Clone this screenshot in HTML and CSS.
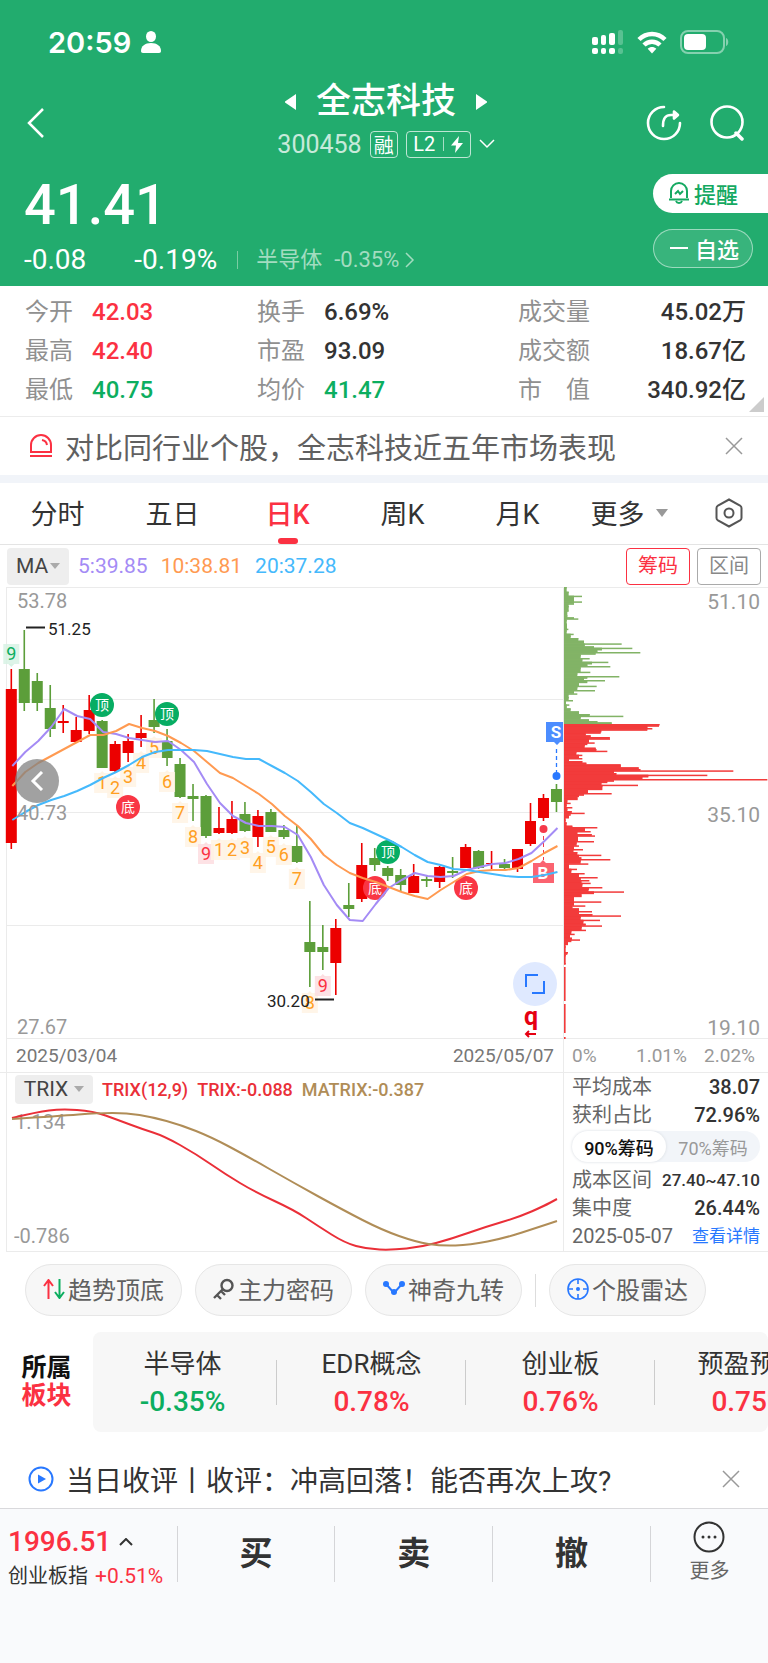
FILE: index.html
```html
<!DOCTYPE html>
<html lang="zh-CN">
<head>
    <meta charset="UTF-8">
    <meta name="viewport" content="width=device-width, initial-scale=1.0">
    <title>全志科技 300458</title>
    <link rel="stylesheet" href="styles.css">
</head>
<body>
    <header class="header">
        <div class="status-bar">
            <div class="status-left">
                <span class="clock">20:59</span>
                <svg width="20" height="22" viewBox="0 0 20 22" fill="#fff"><ellipse cx="10" cy="5.5" rx="5" ry="5.5"/><path d="M0 20c0-5 4-8 10-8s10 3 10 8c0 1.300-.7 2-2 2H2c-1.300 0-2-.7-2-2z"/></svg>
            </div>
            <div class="status-right">
                <svg width="32" height="24" viewBox="0 0 32 24" fill="#fff">
                    <rect x="0" y="7" width="6" height="8" rx="2"/><rect x="9" y="5" width="5" height="10" rx="2"/><rect x="17" y="3" width="6" height="12" rx="2"/><rect x="26" y="0" width="5" height="15" rx="2" opacity=".25"/>
                    <rect x="0" y="18" width="6" height="6" rx="2"/><rect x="9" y="18" width="5" height="6" rx="2"/><rect x="17" y="18" width="6" height="6" rx="2"/><rect x="26" y="18" width="5" height="6" rx="2" opacity=".25"/>
                </svg>
                <svg width="30" height="23" viewBox="0 0 30 23" fill="none" stroke="#fff" stroke-width="4.500"><path d="M2 8.500c7.500-7.500 18.500-7.500 26 0"/><path d="M7 14c4.500-4.500 11.500-4.500 16 0"/><path d="M15 22.500l-4.300-4.800c2.600-2.200 6-2.200 8.600 0z" fill="#fff" stroke="none"/></svg>
                <svg width="50" height="24" viewBox="0 0 50 24"><rect x="1" y="1" width="43" height="22" rx="7" fill="none" stroke="#fff" stroke-width="2" opacity=".45"/><rect x="4" y="4" width="22" height="16" rx="4" fill="#fff"/><path d="M46 8c3 1 3 7 0 8z" fill="#fff" opacity=".45"/></svg>
            </div>
        </div>

        <nav class="nav">
            <button class="icon-btn back" aria-label="返回"><svg width="18" height="32" viewBox="0 0 18 32" fill="none" stroke="#fff" stroke-width="2.500"><path d="M16 2L2 16l14 14"/></svg></button>
            <div class="nav-center">
                <div class="title">
                    <button class="icon-btn" aria-label="上一只"><svg width="12" height="16" viewBox="0 0 12 16" fill="#fff"><path d="M11 0v16L0 8.500v-1z"/></svg></button>
                    <h1>全志科技</h1>
                    <button class="icon-btn" aria-label="下一只"><svg width="12" height="16" viewBox="0 0 12 16" fill="#fff"><path d="M1 0v16l11-7.500v-1z"/></svg></button>
                </div>
                <div class="subtitle">
                    <span class="code">300458</span>
                    <span class="tag">融</span>
                    <span class="tag tag-l2">L2<i class="tag-line"></i><svg width="12" height="17" viewBox="0 0 12 17" fill="#fff"><path d="M8 0L0 9.500h5L4 17l8-10H7z"/></svg></span>
                    <svg width="16" height="10" viewBox="0 0 16 10" fill="none" stroke="#fff" stroke-width="1.500"><path d="M1 1l7 7 7-7"/></svg>
                </div>
            </div>
            <div class="nav-actions">
                <button class="icon-btn" aria-label="分享"><svg width="36" height="36" viewBox="0 0 36 36" fill="none" stroke="#fff" stroke-width="2.600" stroke-linecap="round"><path d="M18 2a16 16 0 1 0 16 16"/><path d="M17 21c0-7 2-11 8-11h4"/><path d="M28 6.500l4 3.500-4 3.500z" fill="#fff" stroke-linejoin="round"/></svg></button>
                <button class="icon-btn" aria-label="搜索"><svg width="36" height="36" viewBox="0 0 36 36" fill="none" stroke="#fff" stroke-width="2.600"><circle cx="18" cy="17" r="15.500"/><path d="M27 28l6 6" stroke-width="3.500" stroke-linecap="round"/></svg></button>
            </div>
        </nav>

        <section class="quote">
            <div>
                <div class="price">41.41</div>
                <div class="change">
                    <span>-0.08</span>
                    <span class="percent">-0.19%</span>
                    <a class="industry" href="#"><span>半导体</span><span>-0.35%</span><svg width="10" height="16" viewBox="0 0 10 16" fill="none" stroke="currentColor" stroke-width="1.500"><path d="M1 1l7 7-7 7"/></svg></a>
                </div>
            </div>
            <div class="quote-actions">
                <button class="remind"><svg width="22" height="22" viewBox="0 0 22 22" fill="none" stroke="#14a961" stroke-width="2"><path d="M3 16V9a8 8 0 0 1 16 0v7M1 17.500h20M8 19c1 2.500 5 2.500 6 0"/><path d="M7 12l3-3 2 3 3-3"/></svg>提醒</button>
                <button class="watch"><svg width="18" height="2" viewBox="0 0 18 2" fill="#fff"><rect width="18" height="2"/></svg>自选</button>
            </div>
        </section>
    </header>

    <main>
        <section class="stats">
            <dl>
                <dt>今开</dt><dd class="up">42.03</dd>
                <dt>最高</dt><dd class="up">42.40</dd>
                <dt>最低</dt><dd class="down">40.75</dd>
            </dl>
            <dl>
                <dt>换手</dt><dd>6.69%</dd>
                <dt>市盈</dt><dd>93.09</dd>
                <dt>均价</dt><dd class="down">41.47</dd>
            </dl>
            <dl class="stats-right">
                <dt>成交量</dt><dd>45.02万</dd>
                <dt>成交额</dt><dd>18.67亿</dd>
                <dt>市　值</dt><dd>340.92亿</dd>
            </dl>
            <span class="corner"></span>
        </section>

        <section class="notice">
            <svg width="24" height="24" viewBox="0 0 24 24" fill="none" stroke="#fb3142" stroke-width="2"><path d="M2 18v-7a10 10 0 0 1 20 0v7zM1 22h22M13 6c3 .5 4.500 2 5 5"/></svg>
            <a href="#">对比同行业个股，全志科技近五年市场表现</a>
            <button class="icon-btn" aria-label="关闭"><svg width="18" height="18" viewBox="0 0 18 18" stroke="#999" stroke-width="1.500"><path d="M1 1l16 16M17 1L1 17"/></svg></button>
        </section>

        <nav class="tabs">
            <button>分时</button>
            <button>五日</button>
            <button class="active">日K</button>
            <button>周K</button>
            <button>月K</button>
            <button class="tab-more">更多<i class="caret"></i></button>
            <button class="tab-set" aria-label="设置"><svg width="28" height="30" viewBox="0 0 28 30" fill="none" stroke="#555" stroke-width="2"><path d="M14 1.500l11 6q1.500 1 1.500 2.500v10q0 1.500-1.500 2.500l-11 6-11-6Q1.500 21.500 1.500 20V10Q1.500 8.500 3 7.500z"/><circle cx="14" cy="15" r="4.500"/></svg></button>
        </nav>

        <div class="ma-bar">
            <button class="indicator">MA<i class="caret"></i></button>
            <span class="ma5">5:39.85</span>
            <span class="ma10">10:38.81</span>
            <span class="ma20">20:37.28</span>
            <button class="chip chip-on">筹码</button>
            <button class="chip">区间</button>
        </div>

        <section class="kline">
            <svg id="kline" viewBox="0 0 768 452">
                <g class="grid">
                    <path d="M6 .5H768M6 112.500H563M6 225.500H563M6 338.500H563M6 451.500H768M6.500 0V452M563.500 0V452"/>
                </g>
                <g id="candles"></g>
                <g id="marks"></g>
                <g class="badges">
                    <g class="top-badge"><circle cx="102" cy="118" r="12"/><circle cx="167" cy="127" r="12"/><circle cx="388" cy="265" r="12"/></g>
                    <g class="bottom-badge"><circle cx="128" cy="220" r="12"/><circle cx="375" cy="301" r="12"/><circle cx="466" cy="301" r="12"/></g>
                    <text x="102" y="123">顶</text><text x="167" y="132">顶</text><text x="388" y="270">顶</text>
                    <text x="128" y="225">底</text><text x="375" y="306">底</text><text x="466" y="306">底</text>
                </g>
                <g class="trade">
                    <path d="M546 135h17v20h-3l-3 3-3-3h-8z" fill="#4c8dff"/>
                    <path d="M556.500 162v24" stroke="#2878ff" stroke-width="1.300" stroke-dasharray="4 3"/>
                    <circle cx="556.500" cy="189" r="4" fill="#2878ff"/>
                    <text x="556" y="151">S</text>
                    <circle cx="543.500" cy="242" r="4" fill="#f5394a"/>
                    <path d="M543.500 249v24" stroke="#f5394a" stroke-dasharray="4 3"/>
                    <path d="M533 276h7l3-3 3 3h8v20h-21z" fill="#fb6370"/>
                    <text x="543" y="292">B</text>
                </g>
                <g id="averages"></g>
                <g id="profile"></g>
                <g class="axis">
                    <text x="17" y="21">53.78</text><text x="17" y="233">40.73</text><text x="17" y="447">27.67</text>
                </g>
                <g class="axis axis-right">
                    <text x="760" y="22">51.10</text><text x="760" y="235">35.10</text><text x="760" y="448">19.10</text>
                </g>
                <g class="extreme">
                    <path d="M26 40.500h19M315 412.500h19"/>
                    <text x="48" y="48">51.25</text><text x="267" y="420">30.20</text>
                </g>
                <text class="ex-right" x="531" y="438">q</text>
                <path d="M526 447h10M529 444l-3 3 3 3" fill="none" stroke="#e60012" stroke-width="2"/>
            </svg>
            <button class="float-btn prev" aria-label="左移"><svg width="14" height="20" viewBox="0 0 14 20" fill="none" stroke="#fff" stroke-width="3"><path d="M12 1L3 10l9 9"/></svg></button>
            <button class="float-btn expand" aria-label="全屏"><svg width="20" height="20" viewBox="0 0 20 20" fill="none" stroke="#2878ff" stroke-width="2"><path d="M1 13V1h12M19 7v12H7"/></svg></button>
        </section>

        <section class="split dates">
            <div class="pane"><span>2025/03/04</span><span>2025/05/07</span></div>
            <div class="scale"><span>0%</span><span>1.01%</span><span>2.02%</span></div>
        </section>

        <section class="split">
            <div class="trix">
                <div class="trix-head">
                    <button class="indicator">TRIX<i class="caret"></i></button>
                    <span class="trix-a">TRIX(12,9)</span>
                    <span class="trix-a">TRIX:-0.088</span>
                    <span class="trix-b">MATRIX:-0.387</span>
                </div>
                <svg id="trix" viewBox="0 0 564 146">
                    <g class="axis"><text x="15" y="24">1.134</text><text x="14" y="138">-0.786</text></g>
                </svg>
            </div>
            <div class="cost">
                <div class="cost-row"><span>平均成本</span><b>38.07</b></div>
                <div class="cost-row"><span>获利占比</span><b>72.96%</b></div>
                <div class="switch"><button class="on">90%筹码</button><button>70%筹码</button></div>
                <div class="cost-row"><span>成本区间</span><b class="range">27.40~47.10</b></div>
                <div class="cost-row"><span>集中度</span><b>26.44%</b></div>
                <div class="cost-row"><span class="day">2025-05-07</span><a href="#">查看详情</a></div>
            </div>
        </section>

        <section class="tools">
            <button><svg width="22" height="20" viewBox="0 0 22 20" fill="none" stroke-width="2"><path d="M5.500 20V1M1 7l4.500-6L10 7" stroke="#fb3142"/><path d="M16.500 0v19M12 13l4.500 6 4.500-6" stroke="#0cae5f"/></svg>趋势顶底</button>
            <button><svg width="22" height="22" viewBox="0 0 22 22" fill="none" stroke="#555" stroke-width="2.400"><circle cx="14" cy="7.500" r="5.500"/><path d="M10 11L1 20M4 17l4 4M8 13l4 4"/></svg>主力密码</button>
            <button><svg width="22" height="18" viewBox="0 0 22 18" fill="none" stroke="#2878ff" stroke-width="2"><path d="M3 4l8 9 8-9"/><g fill="#2878ff" stroke="none"><circle cx="3" cy="4" r="3"/><circle cx="19" cy="4" r="3"/><circle cx="11" cy="12" r="3"/></g></svg>神奇九转</button>
            <i class="tools-line"></i>
            <button><svg width="22" height="22" viewBox="0 0 22 22" fill="none" stroke="#2878ff" stroke-width="1.600"><circle cx="11" cy="11" r="10"/><path d="M11 1v5M11 16v5M1 11h5M16 11h5"/><circle cx="11" cy="11" r="2" fill="#2878ff" stroke="none"/></svg>个股雷达</button>
        </section>

        <section class="sectors">
            <h2>所属<span>板块</span></h2>
            <div class="sector-list">
                <a href="#">半导体<b class="down">-0.35%</b></a>
                <a href="#">EDR概念<b class="up">0.78%</b></a>
                <a href="#">创业板<b class="up">0.76%</b></a>
                <a href="#">预盈预增<b class="up">0.75%</b></a>
            </div>
        </section>

        <section class="notice news">
            <svg width="26" height="26" viewBox="0 0 26 26"><circle cx="13" cy="13" r="11.500" fill="none" stroke="#2878ff" stroke-width="2"/><path d="M10 8.500v9l8-4.500z" fill="#2878ff"/></svg>
            <a href="#">当日收评丨收评：冲高回落！能否再次上攻?</a>
            <button class="icon-btn" aria-label="关闭"><svg width="18" height="18" viewBox="0 0 18 18" stroke="#999" stroke-width="1.500"><path d="M1 1l16 16M17 1L1 17"/></svg></button>
        </section>
    </main>

    <footer class="bottom-bar">
        <div class="index">
            <div class="index-value">1996.51<svg width="14" height="8" viewBox="0 0 14 8" fill="none" stroke="#333" stroke-width="2"><path d="M1 7l6-6 6 6"/></svg></div>
            <div class="index-name">创业板指 <span class="up">+0.51%</span></div>
        </div>
        <button>买</button>
        <button>卖</button>
        <button>撤</button>
        <button class="more"><svg width="32" height="32" viewBox="0 0 32 32" fill="#333"><circle cx="16" cy="16" r="14.500" fill="none" stroke="#333" stroke-width="2"/><circle cx="10" cy="16" r="1.500"/><circle cx="16" cy="16" r="1.500"/><circle cx="22" cy="16" r="1.500"/></svg>更多</button>
    </footer>

    <script src="chart.js"></script>
</body>
</html>
```

FILE: styles.css
```css
* {
    box-sizing: border-box;
}
body {
    margin: 0;
    min-height: 100vh;
    display: flex;
    flex-direction: column;
    font-family: Roboto, "Noto Sans CJK SC", sans-serif;
    color: #333;
    background: #fff;
}
button {
    padding: 0;
    border: none;
    background: none;
    font: inherit;
    color: inherit;
    cursor: pointer;
}
a {
    color: inherit;
    text-decoration: none;
}
svg {
    display: block;
    flex: none;
}
.up {
    color: #fb3142;
}
.down {
    color: #0cae5f;
}
.icon-btn {
    display: flex;
}
.caret {
    border: 6px solid transparent;
    border-top: 8px solid #999;
    border-bottom: 0;
}

/* header */
.header {
    background: #22ac6e;
    color: #fff;
    padding-bottom: 12px;
}
.status-bar {
    height: 80px;
    padding: 4px 38px 0 48px;
    display: flex;
    align-items: center;
    justify-content: space-between;
}
.status-left,
.status-right {
    display: flex;
    align-items: center;
    gap: 13px;
}
.clock {
    font-family: Inter, sans-serif;
    font-size: 29px;
    font-weight: 600;
}
.status-left {
    gap: 10px;
}
.nav {
    display: grid;
    grid-template-columns: 1fr auto 1fr;
    align-items: center;
    padding: 0 23px 0 27px;
}
.back {
    padding-top: 8px;
}
.nav-center {
    display: flex;
    flex-direction: column;
    align-items: center;
    gap: 6px;
}
.title,
.subtitle {
    display: flex;
    align-items: center;
}
.title {
    gap: 19px;
}
.title h1 {
    margin: 0;
    font-size: 35px;
    font-weight: 500;
    line-height: 44px;
}
.subtitle {
    gap: 8px;
    height: 28px;
    font-size: 25px;
}
.code {
    opacity: .75;
}
.tag {
    height: 27px;
    padding: 0 3px;
    display: flex;
    align-items: center;
    border: 1px solid rgba(255, 255, 255, .7);
    border-radius: 4px;
    font-size: 20px;
}
.tag-l2 {
    width: 65px;
    justify-content: space-around;
}
.tag-line {
    width: 1px;
    height: 14px;
    background: rgba(255, 255, 255, .6);
}
.nav-actions {
    display: flex;
    justify-content: flex-end;
    gap: 27px;
    padding-top: 8px;
}
.quote {
    margin-top: 16px;
    padding-left: 24px;
    display: flex;
    justify-content: space-between;
}
.price {
    font-size: 56px;
    font-weight: 500;
    line-height: 62px;
}
.change {
    margin-top: 10px;
    display: flex;
    align-items: center;
    font-size: 28px;
    line-height: 28px;
}
.percent {
    margin-left: 48px;
}
.industry {
    margin-left: 20px;
    display: flex;
    align-items: center;
    gap: 12px;
    font-size: 22px;
    color: #a3dcc0;
}
.industry svg {
    margin-left: -6px;
}
.industry::before {
    content: "";
    width: 1px;
    height: 18px;
    margin-right: 6px;
    background: #7acca3;
}
.quote-actions {
    display: flex;
    flex-direction: column;
    gap: 16px;
}
.quote-actions button {
    height: 39px;
    padding-bottom: 2px;
    display: flex;
    align-items: center;
    font-size: 22px;
    font-weight: 500;
}
.quote-actions .remind {
    width: 115px;
    padding-left: 15px;
    gap: 4px;
    border-radius: 20px 0 0 20px;
    background: #fff;
    color: #14a961;
}
.quote-actions .watch {
    width: 100px;
    padding-left: 16px;
    gap: 7px;
    border: 1px solid rgba(255, 255, 255, .5);
    border-radius: 20px;
    background: rgba(255, 255, 255, .1);
}

/* figures */
.stats {
    position: relative;
    display: grid;
    grid-template-columns: 232fr 261fr 228fr;
    padding: 7px 22px 6px 25px;
    border-bottom: 1px solid #ececec;
}
.stats dl {
    margin: 0;
    display: grid;
    grid-template-columns: auto 1fr;
    column-gap: 19px;
    font-size: 24px;
    line-height: 39px;
}
.stats dt {
    color: #909090;
}
.stats dd {
    margin: 0;
    font-weight: 500;
}
.stats-right dd {
    text-align: right;
}
.corner {
    position: absolute;
    right: 4px;
    bottom: 4px;
    border-left: 15px solid transparent;
    border-bottom: 15px solid #ccc;
}

.notice {
    height: 58px;
    padding: 0 25px 0 29px;
    display: flex;
    align-items: center;
    gap: 12px;
    font-size: 29px;
    color: #606060;
}
.notice .icon-btn {
    margin-left: auto;
}

/* period tabs */
.tabs {
    display: flex;
    height: 70px;
    padding-right: 25px;
    border-top: 8px solid #f1f4f9;
    border-bottom: 1px solid #e4e4e4;
    font-size: 27px;
}
.tabs button {
    flex: 115;
    position: relative;
    padding-bottom: 2px;
}
.tabs .active {
    color: #fb3142;
    font-weight: 500;
}
.tabs .active::after {
    content: "";
    position: absolute;
    left: 50%;
    bottom: 0;
    width: 20px;
    margin-left: -10px;
    height: 6px;
    border-radius: 3px;
    background: #fb3142;
}
.tabs .tab-more {
    flex: 108;
    display: flex;
    align-items: center;
    justify-content: center;
    gap: 11px;
}
.tabs .tab-set {
    flex: 60;
    display: flex;
    align-items: center;
    justify-content: flex-end;
}

.ma-bar {
    height: 42px;
    padding: 0 7px;
    display: flex;
    align-items: center;
    gap: 13px;
    font-size: 21px;
}
.indicator {
    display: flex;
    align-items: center;
    justify-content: center;
    gap: 2px;
    width: 62px;
    height: 37px;
    border-radius: 4px;
    background: #eee;
    color: #444;
}
.indicator .caret {
    border-width: 5px;
    border-top-width: 6px;
    border-bottom: 0;
    border-top-color: #aaa;
}
.indicator + span {
    margin-left: -4px;
}
.ma5 {
    color: #a48bf5;
}
.ma10 {
    color: #ff9a51;
}
.ma20 {
    color: #45b9fc;
}
.chip {
    width: 64px;
    height: 37px;
    border: 1px solid #aaa;
    border-radius: 4px;
    font-size: 20px;
    line-height: 34px;
    color: #888;
}
.chip + .chip {
    margin-left: -6px;
}
.chip-on {
    margin-left: auto;
    border-color: #fb3142;
    color: #fb3142;
}

/* candle chart */
.kline {
    position: relative;
}
.kline > svg,
.trix > svg {
    width: 100%;
    height: auto;
}
.grid path {
    fill: none;
    stroke: #ebebeb;
}
.axis text {
    font-size: 20px;
    fill: #999;
}
.axis-right text {
    font-size: 21px;
    text-anchor: end;
}
.extreme text {
    font-size: 17px;
    fill: #222;
}
.extreme path {
    stroke: #222;
    stroke-width: 2;
}
.top-badge {
    fill: #07ad63;
}
.bottom-badge {
    fill: #f93644;
}
.badges text {
    font-size: 14px;
    text-anchor: middle;
    fill: #fff;
}
.trade text {
    font-size: 17px;
    font-weight: 700;
    text-anchor: middle;
    fill: #fff;
}
.mark {
    font-size: 18px;
    text-anchor: middle;
}
.average {
    fill: none;
    stroke-width: 2;
    stroke-linejoin: round;
}
.ex-right {
    font-size: 25px;
    font-weight: 700;
    text-anchor: middle;
    fill: #e60012;
}
.float-btn {
    position: absolute;
    width: 44px;
    height: 44px;
    border-radius: 50%;
    display: flex;
    align-items: center;
    justify-content: center;
}
.prev {
    left: 2%;
    top: 38%;
    background: rgba(130, 130, 130, .75);
}
.expand {
    right: 27.500%;
    top: 83%;
    background: #dfe9ff;
}

.split {
    display: grid;
    grid-template-columns: 564fr 204fr;
}
.dates {
    height: 34px;
    font-size: 19px;
    line-height: 34px;
    border-bottom: 1px solid #ebebeb;
}
.pane {
    display: flex;
    justify-content: space-between;
    margin-left: 6px;
    padding: 0 9px;
    border-left: 1px solid #ebebeb;
    border-right: 1px solid #ebebeb;
    color: #777;
}
.scale {
    display: grid;
    grid-template-columns: 64px 1fr auto;
    padding: 0 13px 0 8px;
    color: #999;
}

/* TRIX and cost */
.trix {
    margin-left: 6px;
    border: 1px solid #ebebeb;
    border-top: 0;
}
.trix > svg {
    width: calc(100% + 8px);
    margin-left: -7px;
}
.trix-head {
    height: 32px;
    padding: 0 8px;
    display: flex;
    align-items: center;
    gap: 9px;
    font-size: 18px;
    font-weight: 500;
}
.trix-head .indicator {
    width: 78px;
    height: 29px;
    gap: 6px;
    font-size: 21px;
    font-weight: 400;
}
.trix-head .indicator + span {
    margin-left: 0;
}
.trix-a {
    color: #ea2f38;
}
.trix-b {
    color: #b08d57;
}
.cost {
    padding: 0 8px;
    border-bottom: 1px solid #ebebeb;
    font-size: 20px;
}
.cost-row {
    display: flex;
    align-items: center;
    justify-content: space-between;
    height: 28px;
    line-height: 26px;
    padding-bottom: 1px;
    color: #666;
}
.cost-row b {
    font-weight: 500;
    color: #333;
}
.cost-row .range {
    font-size: 17px;
}
.cost-row a {
    font-size: 17px;
    color: #2878ff;
}
.switch {
    display: flex;
    height: 31px;
    margin: 2px 0 4px;
    border-radius: 16px;
    background: #f2f5f9;
    font-size: 18px;
    color: #999;
}
.switch button {
    flex: 1;
}
.switch .on {
    border-radius: 16px;
    background: #fff;
    box-shadow: 0 0 3px #d5d9df;
    font-weight: 500;
    color: #111;
}

.tools {
    display: flex;
    align-items: center;
    gap: 13px;
    padding: 12px 25px 16px;
}
.tools button {
    flex: 0 0 157px;
    height: 52px;
    padding-bottom: 3px;
    display: flex;
    align-items: center;
    justify-content: center;
    gap: 3px;
    border: 1px solid #e6e6e6;
    border-radius: 26px;
    background: #f7f7f7;
    font-size: 24px;
    color: #606060;
}
.tools-line {
    width: 1px;
    height: 33px;
    background: #ddd;
}

.sectors {
    display: flex;
    align-items: center;
}
.sectors h2 {
    flex: none;
    width: 93px;
    margin: 0;
    text-align: center;
    font-size: 25px;
    font-weight: 700;
    line-height: 28px;
    color: #111;
}
.sectors h2 span {
    display: block;
    color: #fb3142;
}
.sector-list {
    flex: 1;
    display: flex;
    height: 100px;
    overflow: hidden;
    border-radius: 8px;
    background: #f7f7f7;
}
.sector-list a {
    flex: 0 0 28%;
    display: flex;
    flex-direction: column;
    align-items: center;
    justify-content: center;
    padding-top: 2px;
    font-size: 26px;
    line-height: 38px;
    background: linear-gradient(#ccc, #ccc) right / 1px 45px no-repeat;
}
.sector-list a:first-child {
    margin-left: -5px;
}
.sector-list b {
    font-size: 28px;
    font-weight: 500;
}
.news {
    height: 76px;
    padding: 18px 28px 0;
    font-size: 28px;
    color: #333;
}

/* bottom bar */
.bottom-bar {
    flex: 1;
    display: flex;
    align-items: flex-start;
    padding-top: 17px;
    border-top: 1px solid #d9d9dc;
    background: #f9fafc;
}
.index {
    flex: 0 0 23%;
    padding-left: 8px;
}
.index-value {
    display: flex;
    align-items: center;
    gap: 8px;
    font-size: 28px;
    font-weight: 500;
    line-height: 32px;
    color: #fb3142;
}
.index-name {
    font-size: 20px;
    line-height: 36px;
    white-space: nowrap;
}
.index-name .up {
    margin-left: 2px;
    font-size: 21px;
}
.bottom-bar button {
    flex: 158;
    height: 56px;
    padding-bottom: 7px;
    border-left: 1px solid #d5d5d8;
    font-size: 33px;
    font-weight: 700;
}
.bottom-bar .more {
    flex: 118;
    padding-bottom: 2px;
    display: flex;
    flex-direction: column;
    align-items: center;
    justify-content: center;
    gap: 4px;
    font-size: 20px;
    font-weight: 400;
    line-height: 28px;
    color: #666;
}
```

FILE: chart.js
```js
const NS = "http://www.w3.org/2000/svg";
const RED = "#ec0000";
const GREEN = "#5c9e3a";

function add(parent, tag, attrs, text) {
    const el = document.createElementNS(NS, tag);
    for (const key in attrs) {
        el.setAttribute(key, attrs[key]);
    }
    if (text) {
        el.textContent = text;
    }
    parent.appendChild(el);
    return el;
}

const xAt = (i) => 11.3 + i * 12.98;

// direction, high, body top, body bottom, low
const candles = [
    ["r", 82, 102, 256, 262], ["g", 43, 82, 116, 124], ["g", 86, 94, 116, 124], ["g", 98, 121, 142, 150],
    ["r", 118, 134, 136, 146], ["r", 130, 143, 155, 156], ["r", 108, 123, 144, 147], ["g", 133, 134, 181, 181],
    ["r", 154, 157, 184, 185], ["r", 147, 154, 166, 175], ["r", 128, 146, 151, 160], ["g", 112, 133, 140, 146],
    ["g", 142, 154, 171, 179], ["g", 171, 177, 210, 211], ["g", 197, 209, 212, 234], ["g", 208, 209, 249, 251],
    ["r", 220, 241, 246, 247], ["r", 214, 232, 246, 247], ["g", 215, 227, 244, 245], ["r", 223, 229, 250, 260],
    ["g", 222, 225, 245, 245], ["g", 238, 243, 250, 252], ["g", 239, 259, 275, 276], ["g", 314, 355, 365, 400],
    ["g", 338, 360, 365, 383], ["r", 332, 341, 376, 408], ["g", 296, 318, 322, 330], ["r", 256, 278, 312, 315],
    ["g", 261, 271, 278, 284], ["g", 279, 281, 289, 294], ["g", 282, 288, 298, 304], ["r", 277, 289, 306, 306],
    ["g", 288, 292, 294, 300], ["r", 279, 280, 295, 301], ["g", 270, 284, 286, 291], ["r", 257, 260, 281, 281],
    ["g", 263, 264, 281, 282], ["r", 264, 276, 277, 282], ["g", 272, 277, 281, 282], ["r", 262, 262, 282, 285],
    ["r", 216, 234, 257, 259], ["r", 207, 211, 231, 234], ["g", 197, 202, 215, 225]
];

const candleLayer = document.getElementById("candles");
candles.forEach(([dir, high, top, bottom, low], i) => {
    const fill = dir === "r" ? RED : GREEN;
    add(candleLayer, "rect", { x: xAt(i) - 0.8, y: high, width: 1.6, height: low - high, fill });
    add(candleLayer, "rect", { x: xAt(i) - 5.5, y: top, width: 11, height: bottom - top, fill });
});

// candle index, label, centre y, colour
const marks = [
    [0, "9", 67, "g"], [7, "1", 196, "y"], [8, "2", 201, "y"], [9, "3", 190, "y"], [10, "4", 176, "y"],
    [11, "5", 161, "y"], [12, "6", 195, "y"], [13, "7", 226, "y"], [14, "8", 250, "y"], [15, "9", 267, "r"],
    [16, "1", 263, "y"], [17, "2", 263, "y"], [18, "3", 261, "y"], [19, "4", 276, "y"], [20, "5", 260, "y"],
    [21, "6", 268, "y"], [22, "7", 292, "y"], [23, "8", 416, "y"], [24, "9", 399, "r"]
];
const markColors = {
    y: ["#ff9f22", "#fff3e4"],
    r: ["#fb3142", "#fddde0"],
    g: ["#0cae5f", "#d7f2e4"]
};

const markLayer = document.getElementById("marks");
marks.forEach(([i, label, y, color]) => {
    const [ink, paper] = markColors[color];
    const x = xAt(i);
    const pointer = color === "g" ? `M${x - 3} ${y + 10}l3 3 3-3z` : `M${x - 3} ${y - 9}l3-3 3 3z`;
    add(markLayer, "rect", { x: x - 8, y: y - 10, width: 16, height: 20, fill: paper, opacity: 0.85 });
    add(markLayer, "path", { d: pointer, fill: paper });
    add(markLayer, "text", { x, y: y + 6, fill: ink, class: "mark" }, label);
});

const averages = {
    "#a48bf5": [179, 165, 154, 140, 122, 129, 132, 145, 147, 151, 153, 155, 154, 163, 175, 197, 216, 229, 236, 239, 239, 240, 248, 270, 298, 318, 333, 334, 317, 301, 293, 286, 289, 290, 289, 283, 280, 277, 276, 272, 266, 254, 241],
    "#ff9a51": [199, 185, 176, 169, 162, 155, 148, 148, 144, 137, 141, 144, 149, 156, 164, 175, 186, 191, 199, 207, 217, 229, 239, 252, 268, 278, 286, 291, 295, 300, 305, 309, 312, 303, 295, 287, 284, 283, 283, 281, 274, 266, 259],
    "#45b9fc": [233, 225, 218, 213, 209, 204, 198, 191, 185, 178, 170, 165, 163, 163, 163, 164, 167, 170, 172, 172, 179, 186, 194, 205, 217, 226, 236, 241, 247, 253, 260, 268, 275, 278, 282, 283, 285, 287, 289, 290, 290, 288, 285]
};
for (const color in averages) {
    const points = averages[color].map((y, i) => `${xAt(i) + 1},${y}`).join(" ");
    add(document.getElementById("averages"), "polyline", { points, stroke: color, class: "average" });
}

// chip distribution: level and length, three units to a pixel
const chips = [
    [0, 8], [14, 14], [26, 54], [35, 30], [43, 54], [49, 30], [57, 14], [70, 14], [85, 10], [91, 30], [94, 43],
    [99, 8], [110, 9], [125, 13], [130, 8], [140, 29], [146, 20], [153, 43], [161, 60], [169, 173], [173, 62],
    [178, 90], [182, 205], [186, 114], [191, 100], [195, 229], [199, 95], [204, 50], [213, 77], [217, 55],
    [224, 133], [228, 84], [233, 70], [237, 139], [242, 50], [254, 79], [259, 40], [267, 166], [271, 70],
    [275, 60], [279, 123], [284, 70], [288, 45], [296, 98], [300, 40], [309, 93], [313, 30], [319, 40],
    [330, 14], [339, 27], [344, 6], [352, 16], [358, 8], [364, 20], [373, 45], [381, 77], [386, 178],
    [390, 50], [397, 75], [402, 100], [406, 143], [411, 287], [415, 285], [419, 250], [423, 265], [427, 250],
    [432, 112], [436, 110], [440, 65], [445, 80], [450, 137], [454, 138], [458, 75], [466, 92], [470, 70],
    [474, 62], [482, 95], [486, 97], [491, 130], [495, 37], [503, 55], [508, 45], [513, 55], [517, 15],
    [522, 55], [527, 67], [532, 170], [536, 170], [541, 224], [546, 229], [550, 508], [554, 150], [558, 157],
    [563, 430], [567, 253], [571, 235], [576, 610], [580, 150], [584, 130], [588, 112], [593, 222], [597, 115],
    [605, 115], [609, 72], [618, 143], [622, 60], [626, 45], [635, 41], [640, 10], [647, 20], [653, 8],
    [660, 25], [666, 10], [672, 23], [677, 62], [682, 20], [690, 15], [698, 5], [706, 8], [716, 25], [720, 100],
    [724, 63], [732, 80], [736, 40], [741, 83], [745, 93], [753, 42], [762, 90], [766, 38], [775, 45],
    [780, 30], [786, 57], [790, 28], [795, 40], [803, 112], [807, 45], [811, 52], [816, 139], [820, 50],
    [829, 73], [837, 15], [845, 39], [849, 22], [858, 62], [862, 45], [870, 101], [874, 50], [879, 76],
    [883, 52], [887, 80], [891, 55], [900, 115], [904, 75], [908, 73], [913, 180], [917, 90], [926, 53],
    [934, 30], [943, 112], [947, 30], [955, 64], [960, 25], [964, 45], [972, 84], [976, 45], [981, 85],
    [985, 171], [989, 50], [998, 108], [1002, 58], [1010, 65], [1015, 114], [1019, 53], [1028, 66],
    [1032, 22], [1040, 32], [1044, 18], [1052, 24], [1057, 48], [1061, 22], [1070, 12], [1078, 5],
    [1095, 12], [1099, 10], [1104, 5], [1129, 5]
];
const closeLevel = 408;
const profile = document.getElementById("profile");
chips.forEach(([level, length], i) => {
    const fill = level < closeLevel ? "#82b366" : "#f23b3b";
    add(profile, "rect", { x: 564, y: level / 3, width: length / 3, height: 1.5, fill });
    // levels up to the next reading take the shorter of the two
    if (i < chips.length - 1) {
        const [end, endLength] = chips[i + 1];
        add(profile, "rect", { x: 564, y: level / 3, width: Math.min(length, endLength) / 3, height: (end - level) / 3 + 0.5, fill });
    }
});
[[376, 1], [380, 34], [417, 29], [450, 2]].forEach(([y, height]) => {
    add(profile, "rect", { x: 564, y, width: 1.6, height, fill: "#f23b3b" });
});

const trixLines = {
    "#ea2f38": [[12, 13], [37, 7], [61, 4], [93, 6], [118, 15], [142, 24], [164, 31], [196, 49], [225, 69], [255, 87], [294, 105], [318, 121], [345, 138], [367, 144], [392, 145], [421, 142], [451, 134], [485, 122], [519, 112], [544, 101], [557, 94]],
    "#b08d57": [[12, 14], [59, 11], [98, 8], [127, 8], [152, 12], [181, 20], [211, 32], [245, 50], [294, 78], [343, 105], [382, 125], [416, 137], [441, 141], [470, 140], [505, 133], [539, 122], [557, 116]]
};
for (const color in trixLines) {
    const pts = trixLines[color];
    let d = `M${pts[0]}`;
    for (let i = 1; i < pts.length - 1; i++) {
        const [x, y] = pts[i];
        const [nx, ny] = pts[i + 1];
        d += `Q${x} ${y} ${(x + nx) / 2} ${(y + ny) / 2}`;
    }
    d += `L${pts[pts.length - 1]}`;
    add(document.getElementById("trix"), "path", { d, stroke: color, class: "average" });
}
```
